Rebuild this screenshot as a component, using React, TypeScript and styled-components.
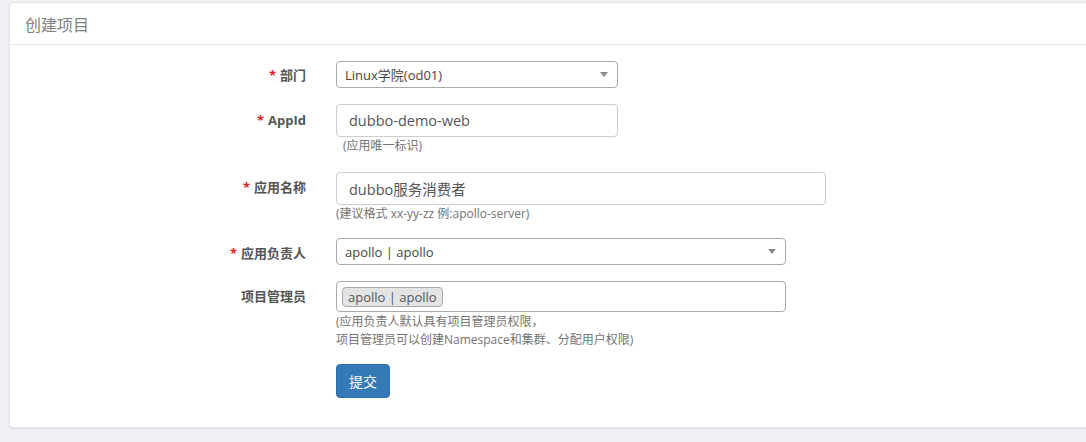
import React from "react";
import styled, { createGlobalStyle } from "styled-components";

const Global = createGlobalStyle`
  html, body { margin: 0; padding: 0; background: #f0f1f5; overflow: hidden; }
  body { font-family: "Open Sans", "Noto Sans CJK SC", sans-serif; color: #555; }
  * { box-sizing: border-box; }
`;

const Page = styled.div`
  padding: 2px 0 14px 9px;
`;

const Panel = styled.div`
  background: #fff;
  border: 1px solid #e3e4e8;
  border-radius: 4px;
  margin-right: -20px;
  box-shadow: 0 1px 2px rgba(0, 0, 0, 0.08);
`;

const Header = styled.div`
  height: 42px;
  display: flex;
  align-items: center;
  padding-left: 15px;
  border-bottom: 1px solid #ececec;
  font-size: 16px;
  color: #808080;
`;

const Body = styled.form`
  padding: 16px 0 29px;
  display: flex;
  flex-direction: column;
`;

const Row = styled.div<{ $gap?: number }>`
  display: grid;
  grid-template-columns: 296px 1fr;
  column-gap: 30px;
  margin-top: ${(p) => p.$gap ?? 16}px;
  &:first-child { margin-top: 0; }
`;

const Label = styled.label<{ $pt: number }>`
  text-align: right;
  font-size: 13px;
  font-weight: bold;
  color: #555;
  padding-top: ${(p) => p.$pt}px;
  line-height: 18px;
`;

const Star = styled.span`
  color: #e02020;
  margin-right: 4px;
`;

const Control = styled.div`
  display: flex;
  flex-direction: column;
  align-items: flex-start;
`;

const Select = styled.div<{ $w: number }>`
  width: ${(p) => p.$w}px;
  height: 27px;
  border: 1px solid #aaa;
  border-radius: 4px;
  display: flex;
  align-items: center;
  justify-content: space-between;
  padding: 0 9px 0 8px;
  font-size: 13px;
  color: #444;
`;

const Arrow = styled.span`
  width: 0;
  height: 0;
  border-left: 4px solid transparent;
  border-right: 4px solid transparent;
  border-top: 5px solid #888;
`;

const Input = styled.div<{ $w: number }>`
  width: ${(p) => p.$w}px;
  height: 33px;
  border: 1px solid #ccc;
  border-radius: 4px;
  display: flex;
  align-items: center;
  padding: 0 12px;
  font-size: 14.5px;
  color: #555;
`;

const Multi = styled.div<{ $w: number }>`
  width: ${(p) => p.$w}px;
  height: 31px;
  border: 1px solid #aaa;
  border-radius: 4px;
  display: flex;
  align-items: center;
  padding: 0 5px;
`;

const Tag = styled.span`
  background: #e4e4e4;
  border: 1px solid #aaa;
  border-radius: 4px;
  font-size: 13px;
  color: #555;
  height: 20px;
  line-height: 18px;
  padding: 0 5px;
`;

const Help = styled.div<{ $indent?: number; $mt?: number }>`
  font-size: 12px;
  color: #737373;
  line-height: 18px;
  margin-top: ${(p) => p.$mt ?? 0}px;
  padding-left: ${(p) => p.$indent ?? 0}px;
`;

const Button = styled.button`
  width: 54px;
  height: 34px;
  border: 1px solid #2e6da4;
  background: #337ab7;
  color: #fff;
  border-radius: 4px;
  font-size: 14px;
  font-family: inherit;
  padding: 0;
`;

export default function App() {
  return (
    <>
      <Global />
      <Page>
        <Panel>
          <Header>创建项目</Header>
          <Body>
            <Row>
              <Label $pt={5}>
                <Star>*</Star>部门
              </Label>
              <Control>
                <Select $w={282}>
                  <span>Linux学院(od01)</span>
                  <Arrow />
                </Select>
              </Control>
            </Row>
            <Row>
              <Label $pt={7}>
                <Star>*</Star>AppId
              </Label>
              <Control>
                <Input $w={282}>dubbo-demo-web</Input>
                <Help $indent={7}>(应用唯一标识)</Help>
              </Control>
            </Row>
            <Row $gap={17}>
              <Label $pt={6}>
                <Star>*</Star>应用名称
              </Label>
              <Control>
                <Input $w={490}>dubbo服务消费者</Input>
                <Help>(建议格式 xx-yy-zz 例:apollo-server)</Help>
              </Control>
            </Row>
            <Row $gap={15}>
              <Label $pt={6}>
                <Star>*</Star>应用负责人
              </Label>
              <Control>
                <Select $w={450}>
                  <span>apollo | apollo</span>
                  <Arrow />
                </Select>
              </Control>
            </Row>
            <Row>
              <Label $pt={6}>项目管理员</Label>
              <Control>
                <Multi $w={450}>
                  <Tag>apollo | apollo</Tag>
                </Multi>
                <Help $mt={1}>
                  (应用负责人默认具有项目管理员权限，
                  <br />
                  项目管理员可以创建Namespace和集群、分配用户权限)
                </Help>
              </Control>
            </Row>
            <Row $gap={15}>
              <span />
              <Control>
                <Button type="button">提交</Button>
              </Control>
            </Row>
          </Body>
        </Panel>
      </Page>
    </>
  );
}
